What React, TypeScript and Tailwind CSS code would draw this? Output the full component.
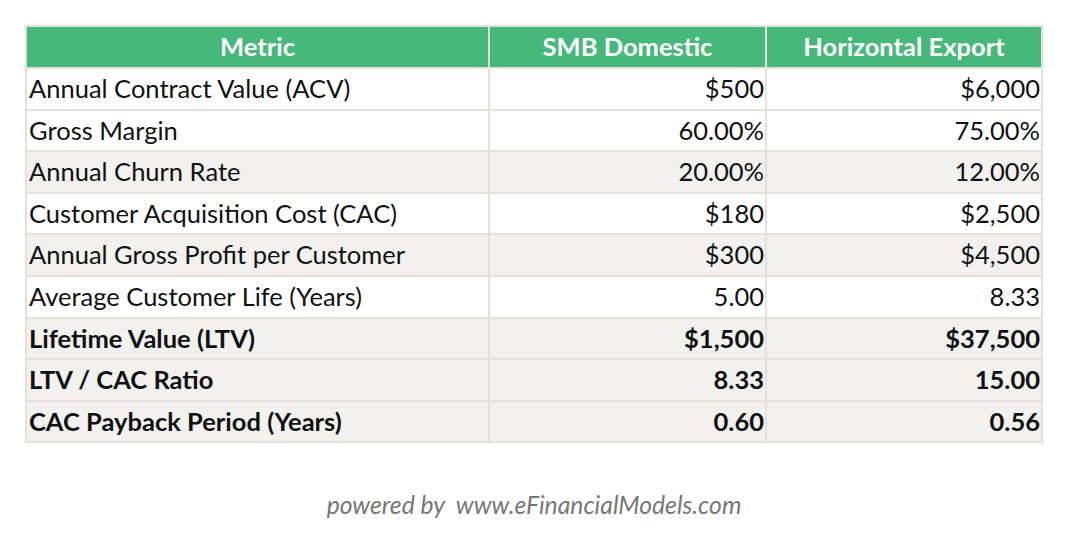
import React from "react";

const rows: { label: string; a: string; b: string; gray: boolean; bold: boolean }[] = [
  { label: "Annual Contract Value (ACV)", a: "$500", b: "$6,000", gray: false, bold: false },
  { label: "Gross Margin", a: "60.00%", b: "75.00%", gray: false, bold: false },
  { label: "Annual Churn Rate", a: "20.00%", b: "12.00%", gray: true, bold: false },
  { label: "Customer Acquisition Cost (CAC)", a: "$180", b: "$2,500", gray: false, bold: false },
  { label: "Annual Gross Profit per Customer", a: "$300", b: "$4,500", gray: true, bold: false },
  { label: "Average Customer Life (Years)", a: "5.00", b: "8.33", gray: false, bold: false },
  { label: "Lifetime Value (LTV)", a: "$1,500", b: "$37,500", gray: true, bold: true },
  { label: "LTV / CAC Ratio", a: "8.33", b: "15.00", gray: true, bold: true },
  { label: "CAC Payback Period (Years)", a: "0.60", b: "0.56", gray: true, bold: true },
];

export default function App() {
  return (
    <div className="w-[1068px] h-[542px] bg-white flex flex-col items-center pt-[25px] text-[#111]" style={{ fontFamily: "Lato, 'Open Sans', sans-serif" }}>
      <table className="border-collapse w-[1018px] text-[25.5px] leading-none">
        <thead>
          <tr className="bg-[#46b97a] text-white font-bold h-[42px]">
            <th className="border-2 border-[#e4e1dd] w-[463px] text-center font-bold">Metric</th>
            <th className="border-2 border-[#e4e1dd] w-[277px] text-center font-bold">SMB Domestic</th>
            <th className="border-2 border-[#e4e1dd] text-center font-bold">Horizontal Export</th>
          </tr>
        </thead>
        <tbody>
          {rows.map((r) => (
            <tr key={r.label} className={`h-[41.6px] ${r.gray ? "bg-[#f2f1ee]" : "bg-white"} ${r.bold ? "font-bold" : "font-normal"}`}>
              <td className="border-2 border-[#e4e1dd] pl-[2px] text-left">{r.label}</td>
              <td className="border-2 border-[#e4e1dd] pr-[1px] text-right">{r.a}</td>
              <td className="border-2 border-[#e4e1dd] pr-[1px] text-right">{r.b}</td>
            </tr>
          ))}
        </tbody>
      </table>
      <div className="mt-[50px] text-[24.7px] leading-none italic text-[#777] whitespace-pre">powered by  www.eFinancialModels.com</div>
    </div>
  );
}
